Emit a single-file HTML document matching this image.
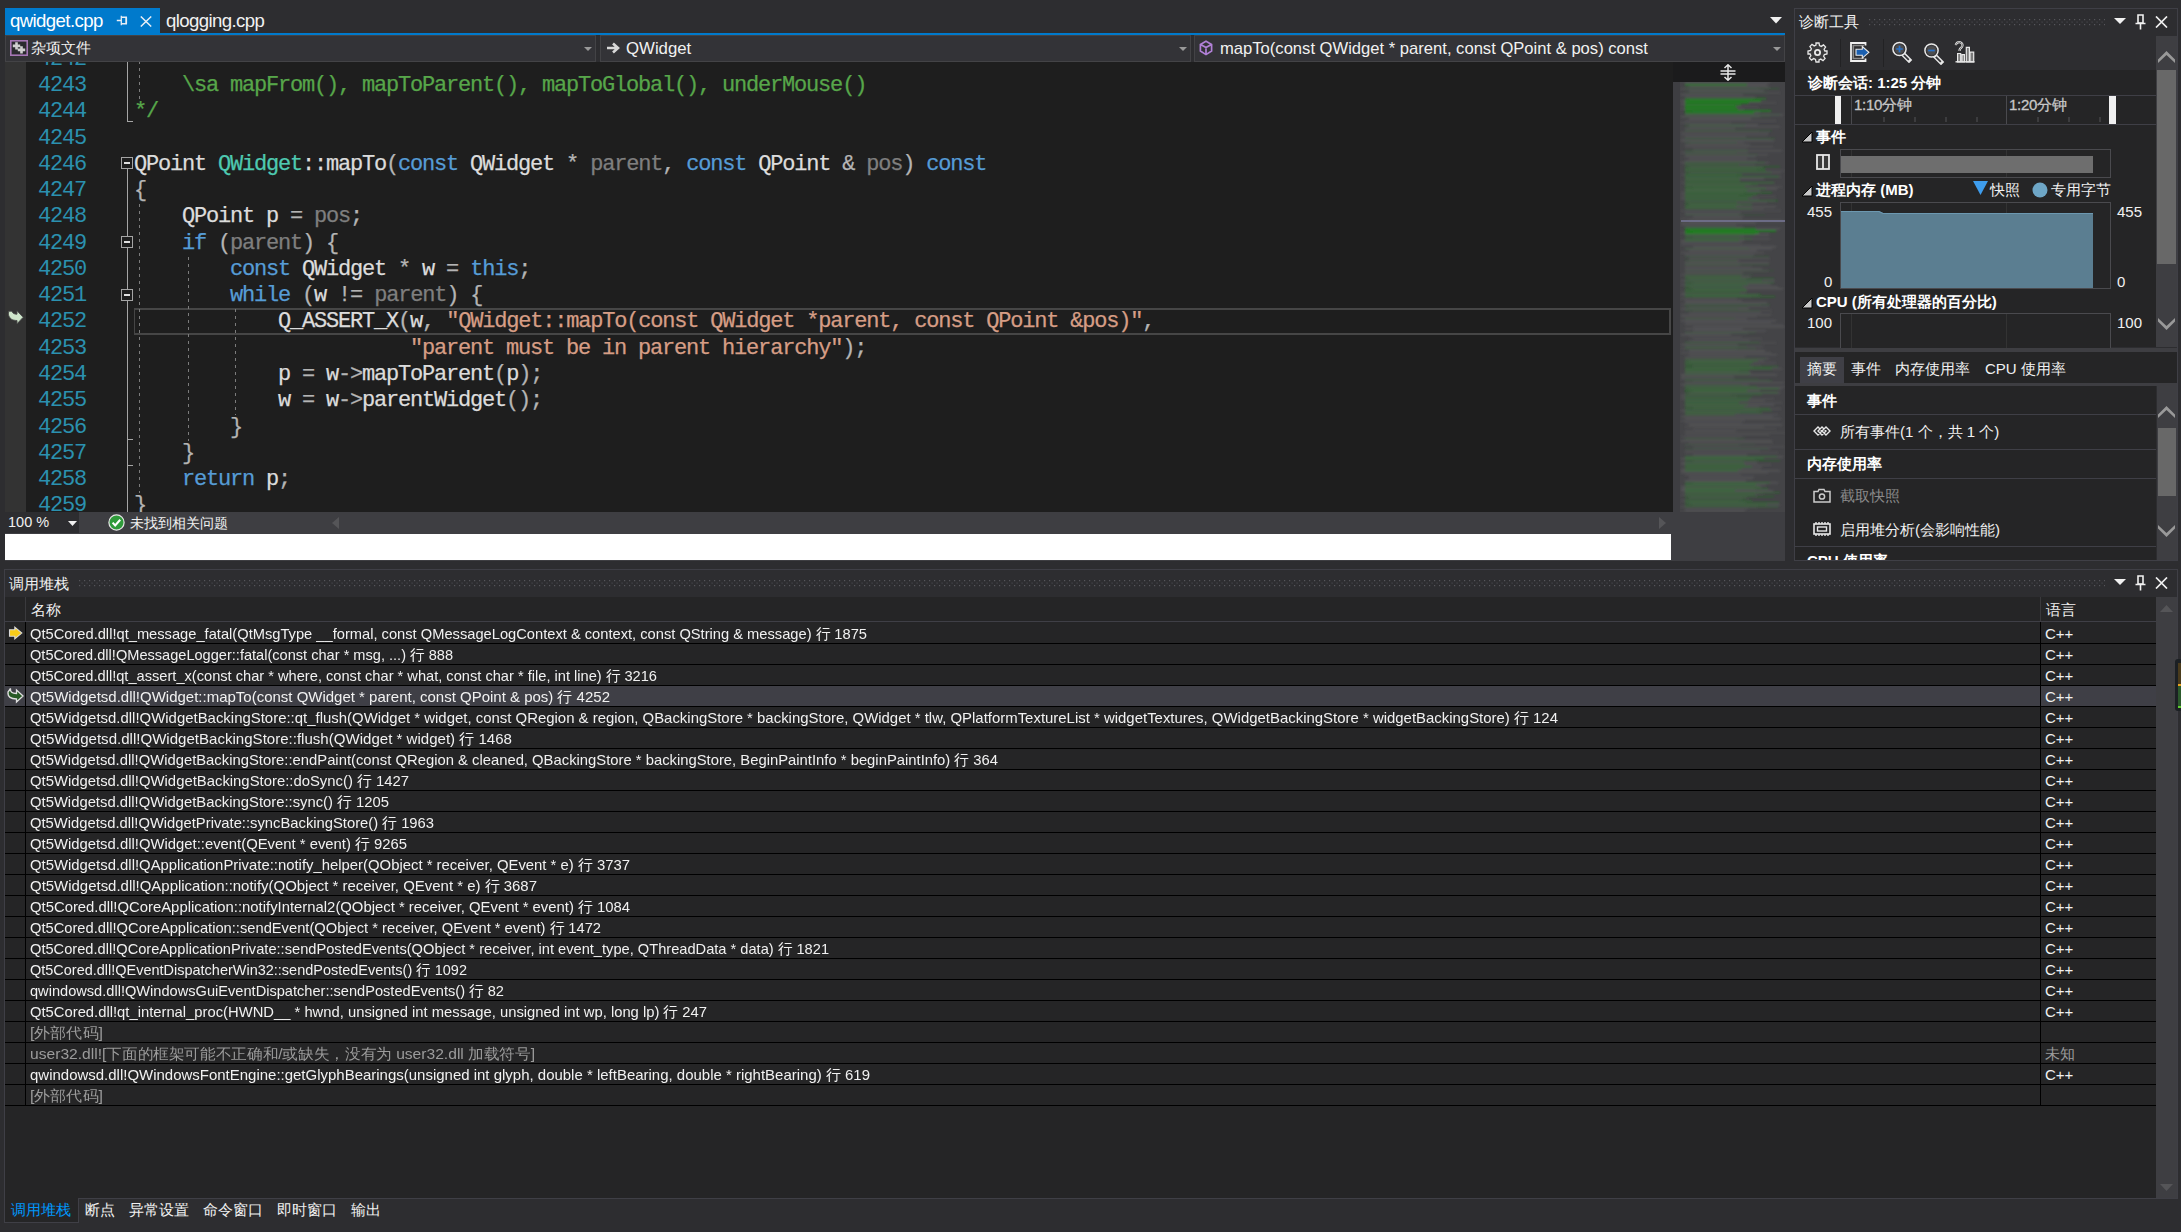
<!DOCTYPE html>
<html><head><meta charset="utf-8"><style>
*{margin:0;padding:0;box-sizing:border-box}
html,body{width:2181px;height:1232px;overflow:hidden;background:#2d2d30;font-family:"Liberation Sans",sans-serif;color:#f1f1f1}
.a{position:absolute}
.code{position:absolute;left:134px;font-family:"Liberation Mono",monospace;font-size:22px;letter-spacing:-1.2px;white-space:pre;color:#dcdcdc;line-height:26px;height:26px;-webkit-text-stroke:0.25px currentColor}
.ln{position:absolute;left:20px;width:66px;text-align:right;font-family:"Liberation Mono",monospace;font-size:22px;letter-spacing:-1.2px;color:#2b91af;line-height:26px;height:26px;white-space:pre}
.k{color:#569cd6}.t{color:#4ec9b0}.c{color:#57a64a}.s{color:#d69d85}.p{color:#7f7f7f}.o{color:#b4b4b4}
.cs{position:absolute;left:30px;font-size:15px;line-height:20px;white-space:pre;color:#f1f1f1}
.lang{position:absolute;left:2045px;font-size:15px;line-height:20px;white-space:pre;color:#f1f1f1}
.row{position:absolute;left:5px;width:2151px;height:21px;background:#252526;border-bottom:1px solid #0f0f0f}
.icol{position:absolute;left:5px;width:20px;height:21px;background:#252526;border-right:1px solid #0f0f0f;border-bottom:1px solid #0f0f0f}
.gray{color:#999}
.grip{background-image:radial-gradient(circle,#4a4a4e 0.8px,transparent 1px);background-size:4px 4px}
.guide{width:1px;background-image:linear-gradient(#7c7c7c 50%,transparent 50%);background-size:1px 7px}
.map{background:#434347}

</style></head><body>
<div class="a" style="left:5px;top:8px;width:155px;height:27px;background:#007acc"></div>
<div class="a" style="left:10px;top:9px;font-size:18.6px;line-height:24px;color:#fff;letter-spacing:-0.6px">qwidget.cpp</div>
<svg class="a" style="left:116px;top:15px" width="12" height="11" viewBox="0 0 12 11"><path d="M0.8 5.5H5M5.3 0.8v9.4" stroke="#e8eef5" stroke-width="1.3"/><path d="M5.3 2.3h5v6.4h-5" fill="none" stroke="#e8eef5" stroke-width="1.4"/><path d="M10.3 2.3v6.4" stroke="#e8eef5" stroke-width="1.6"/></svg>
<svg class="a" style="left:140px;top:16px" width="12" height="11" viewBox="0 0 12 11"><path d="M0.8 0.5l10.4 10M11.2 0.5l-10.4 10" stroke="#e8eef5" stroke-width="1.5"/></svg>
<div class="a" style="left:166px;top:9px;font-size:18.6px;line-height:24px;color:#f1f1f1;letter-spacing:-0.6px">qlogging.cpp</div>
<svg class="a" style="left:1770px;top:17px" width="12" height="7" viewBox="0 0 12 7"><path d="M0 0h12L6 6.5z" fill="#f1f1f1"/></svg>
<div class="a" style="left:5px;top:33px;width:1780px;height:2px;background:#007acc"></div>
<div class="a" style="left:5px;top:35px;width:591px;height:27px;background:#333337;border:1px solid #434346"></div>
<svg class="a" style="left:584px;top:47px" width="8" height="4" viewBox="0 0 8 4"><path d="M0 0h8L4 4z" fill="#999"/></svg>
<div class="a" style="left:600px;top:35px;width:591px;height:27px;background:#333337;border:1px solid #434346"></div>
<svg class="a" style="left:1179px;top:47px" width="8" height="4" viewBox="0 0 8 4"><path d="M0 0h8L4 4z" fill="#999"/></svg>
<div class="a" style="left:1194px;top:35px;width:591px;height:27px;background:#333337;border:1px solid #434346"></div>
<svg class="a" style="left:1773px;top:47px" width="8" height="4" viewBox="0 0 8 4"><path d="M0 0h8L4 4z" fill="#999"/></svg>
<svg class="a" style="left:10px;top:40px" width="18" height="16" viewBox="0 0 18 16"><rect x="0.8" y="0.8" width="16.4" height="14.4" fill="#2a2a2e" stroke="#a677b5" stroke-width="1.6"/><path d="M5.2 2.2h2.6v2.4h2.4v2.6H7.8v2.4H5.2V7.2H2.8V4.6h2.4zM10.2 6.2h2.6v2.4h2.4v2.6h-2.4v2.4h-2.6v-2.4H7.8V8.6h2.4z" fill="#d0d0d0"/></svg>
<div class="a" style="left:31px;top:38px;font-size:15px;line-height:20px">杂项文件</div>
<svg class="a" style="left:606px;top:41px" width="15" height="14" viewBox="0 0 15 14"><path d="M1 7h10M7 2.5l5 4.5-5 4.5" fill="none" stroke="#d8d8d8" stroke-width="2.6"/></svg>
<div class="a" style="left:626px;top:38px;font-size:16.8px;line-height:22px">QWidget</div>
<svg class="a" style="left:1199px;top:40px" width="14" height="16" viewBox="0 0 14 16"><path d="M7 1.2l5.6 3.2v6.6L7 14.6 1.4 11V4.4z M1.6 4.5L7 7.6l5.4-3.1 M7 7.6v6.8" fill="none" stroke="#b180d7" stroke-width="1.7"/></svg>
<div class="a" style="left:1220px;top:38px;font-size:16.6px;line-height:22px">mapTo(const QWidget * parent, const QPoint &amp; pos) const</div>
<div class="a" style="left:5px;top:62px;width:1668px;height:450px;background:#1e1e1e"></div>
<div class="a" style="left:5px;top:62px;width:21px;height:450px;background:#333333"></div>
<div class="a" style="left:0;top:62px;width:1673px;height:450px;overflow:hidden">
<div class="a" style="left:134px;top:246px;width:1537px;height:27px;border:2px solid #464646;border-left-width:1px"></div>
<div class="ln" style="top:-15px">4242</div>
<div class="code" style="top:-15px"><span class="c"></span></div>
<div class="ln" style="top:11px">4243</div>
<div class="code" style="top:11px"><span class="c">    \sa mapFrom(), mapToParent(), mapToGlobal(), underMouse()</span></div>
<div class="ln" style="top:37px">4244</div>
<div class="code" style="top:37px"><span class="c">*/</span></div>
<div class="ln" style="top:64px">4245</div>
<div class="code" style="top:64px"></div>
<div class="ln" style="top:90px">4246</div>
<div class="code" style="top:90px">QPoint <span class="t">QWidget</span>::mapTo<span class="o">(</span><span class="k">const</span> QWidget <span class="o">*</span> <span class="p">parent</span><span class="o">,</span> <span class="k">const</span> QPoint <span class="o">&amp;</span> <span class="p">pos</span><span class="o">)</span> <span class="k">const</span></div>
<div class="ln" style="top:116px">4247</div>
<div class="code" style="top:116px"><span class="o">{</span></div>
<div class="ln" style="top:142px">4248</div>
<div class="code" style="top:142px">    QPoint p <span class="o">=</span> <span class="p">pos</span><span class="o">;</span></div>
<div class="ln" style="top:169px">4249</div>
<div class="code" style="top:169px">    <span class="k">if</span> <span class="o">(</span><span class="p">parent</span><span class="o">)</span> <span class="o">{</span></div>
<div class="ln" style="top:195px">4250</div>
<div class="code" style="top:195px">        <span class="k">const</span> QWidget <span class="o">*</span> w <span class="o">=</span> <span class="k">this</span><span class="o">;</span></div>
<div class="ln" style="top:221px">4251</div>
<div class="code" style="top:221px">        <span class="k">while</span> <span class="o">(</span>w <span class="o">!=</span> <span class="p">parent</span><span class="o">)</span> <span class="o">{</span></div>
<div class="ln" style="top:247px">4252</div>
<div class="code" style="top:247px">            Q_ASSERT_X<span class="o">(</span>w<span class="o">,</span> <span class="s">"QWidget::mapTo(const QWidget *parent, const QPoint &amp;pos)"</span><span class="o">,</span></div>
<div class="ln" style="top:274px">4253</div>
<div class="code" style="top:274px">                       <span class="s">"parent must be in parent hierarchy"</span><span class="o">);</span></div>
<div class="ln" style="top:300px">4254</div>
<div class="code" style="top:300px">            p <span class="o">=</span> w<span class="o">-></span>mapToParent<span class="o">(</span>p<span class="o">);</span></div>
<div class="ln" style="top:326px">4255</div>
<div class="code" style="top:326px">            w <span class="o">=</span> w<span class="o">-></span>parentWidget<span class="o">();</span></div>
<div class="ln" style="top:353px">4256</div>
<div class="code" style="top:353px">        <span class="o">}</span></div>
<div class="ln" style="top:379px">4257</div>
<div class="code" style="top:379px">    <span class="o">}</span></div>
<div class="ln" style="top:405px">4258</div>
<div class="code" style="top:405px">    <span class="k">return</span> p<span class="o">;</span></div>
<div class="ln" style="top:431px">4259</div>
<div class="code" style="top:431px"><span class="o">}</span></div>
<div class="a guide" style="left:139px;top:-15px;height:52px"></div>
<div class="a guide" style="left:139px;top:142px;height:289px"></div>
<div class="a guide" style="left:188px;top:195px;height:184px"></div>
<div class="a guide" style="left:235px;top:247px;height:106px"></div>
<div class="a" style="left:127px;top:0px;width:1px;height:59px;background:#a5a5a5"></div>
<div class="a" style="left:127px;top:59px;width:6px;height:1px;background:#a5a5a5"></div>
<div class="a" style="left:121px;top:95px;width:12px;height:12px;border:1px solid #a5a5a5;background:#1e1e1e"><div class="a" style="left:2px;top:4px;width:6px;height:2px;background:#e0e0e0"></div></div>
<div class="a" style="left:127px;top:107px;width:1px;height:343px;background:#a5a5a5"></div>
<div class="a" style="left:121px;top:174px;width:12px;height:12px;border:1px solid #a5a5a5;background:#1e1e1e"><div class="a" style="left:2px;top:4px;width:6px;height:2px;background:#e0e0e0"></div></div>
<div class="a" style="left:121px;top:227px;width:12px;height:12px;border:1px solid #a5a5a5;background:#1e1e1e"><div class="a" style="left:2px;top:4px;width:6px;height:2px;background:#e0e0e0"></div></div>
<div class="a" style="left:127px;top:377px;width:6px;height:1px;background:#a5a5a5"></div>
<div class="a" style="left:127px;top:403px;width:6px;height:1px;background:#a5a5a5"></div>
<svg class="a" style="left:7px;top:247px" width="17" height="16" viewBox="0 0 17 16"><path d="M1.8 2.2h3c.8 2 2.2 3 5.2 3V1.8L16.2 8.3 10 14.8v-3.3C5 11.5 2.2 9.5 1.3 5z" fill="#cfe6cb" stroke="#4a4a4a" stroke-width="0.9"/></svg>
</div>
<div class="a" style="left:1671px;top:62px;width:2px;height:450px;background:#1e1e1e"></div>
<div class="a" style="left:1673px;top:62px;width:112px;height:20px;background:#1b1b1c"></div>
<svg class="a" style="left:1720px;top:64px" width="16" height="17" viewBox="0 0 16 17"><path d="M8 0.5v16M4.5 4L8 0.8 11.5 4M4.5 13L8 16.2 11.5 13M0.5 7h15M0.5 10h15" fill="none" stroke="#e8e8e8" stroke-width="1.5"/></svg>
<svg class="a" style="left:1673px;top:82px" width="112" height="430" viewBox="0 0 112 430"><defs><filter id="bl" x="-5%" y="-5%" width="110%" height="110%"><feGaussianBlur stdDeviation="0.9"/></filter></defs><rect width="112" height="430" fill="#3e3e42"/><rect x="7" y="0" width="105" height="430" fill="#444447"/><g filter="url(#bl)"><rect x="12" y="0" width="85" height="1.5" fill="#5a5a5c" opacity="0.74"/><rect x="12" y="2" width="82" height="1.5" fill="#5a5a5c" opacity="0.73"/><rect x="12" y="2" width="62" height="1.6" fill="#129012" opacity="0.66"/><rect x="16" y="4" width="80" height="1.5" fill="#5a5a5c" opacity="0.63"/><rect x="8" y="6" width="78" height="1.5" fill="#5a5a5c" opacity="0.49"/><rect x="12" y="6" width="94" height="1.2" fill="#1f8a1f" opacity="0.25"/><rect x="16" y="8" width="75" height="1.5" fill="#5a5a5c" opacity="0.78"/><rect x="16" y="10" width="91" height="1.5" fill="#5a5a5c" opacity="0.42"/><rect x="12" y="10" width="83" height="1.2" fill="#1f8a1f" opacity="0.16"/><rect x="8" y="12" width="62" height="1.5" fill="#5a5a5c" opacity="0.75"/><rect x="12" y="14" width="70" height="1.5" fill="#5a5a5c" opacity="0.55"/><rect x="16" y="16" width="64" height="1.5" fill="#5a5a5c" opacity="0.64"/><rect x="12" y="16" width="81" height="1.6" fill="#129012" opacity="0.60"/><rect x="8" y="18" width="79" height="1.5" fill="#5a5a5c" opacity="0.64"/><rect x="12" y="18" width="76" height="1.6" fill="#129012" opacity="0.90"/><rect x="8" y="20" width="95" height="1.5" fill="#5a5a5c" opacity="0.46"/><rect x="12" y="20" width="64" height="1.6" fill="#129012" opacity="0.75"/><rect x="8" y="22" width="54" height="1.5" fill="#5a5a5c" opacity="0.60"/><rect x="12" y="22" width="56" height="1.6" fill="#129012" opacity="0.72"/><rect x="12" y="24" width="74" height="1.5" fill="#5a5a5c" opacity="0.38"/><rect x="12" y="24" width="51" height="1.6" fill="#129012" opacity="0.85"/><rect x="8" y="26" width="63" height="1.5" fill="#5a5a5c" opacity="0.44"/><rect x="12" y="26" width="53" height="1.6" fill="#129012" opacity="0.74"/><rect x="20" y="28" width="75" height="1.5" fill="#5a5a5c" opacity="0.54"/><rect x="12" y="28" width="86" height="1.6" fill="#129012" opacity="0.79"/><rect x="20" y="30" width="67" height="1.5" fill="#5a5a5c" opacity="0.50"/><rect x="12" y="30" width="69" height="1.6" fill="#129012" opacity="0.70"/><rect x="12" y="32" width="98" height="1.5" fill="#5a5a5c" opacity="0.77"/><rect x="12" y="32" width="95" height="1.2" fill="#1f8a1f" opacity="0.17"/><rect x="8" y="34" width="79" height="1.5" fill="#5a5a5c" opacity="0.71"/><rect x="12" y="34" width="85" height="1.2" fill="#1f8a1f" opacity="0.18"/><rect x="16" y="36" width="62" height="1.5" fill="#5a5a5c" opacity="0.79"/><rect x="12" y="38" width="91" height="1.5" fill="#5a5a5c" opacity="0.52"/><rect x="8" y="40" width="50" height="1.5" fill="#5a5a5c" opacity="0.47"/><rect x="16" y="42" width="69" height="1.5" fill="#5a5a5c" opacity="0.80"/><rect x="12" y="42" width="61" height="1.2" fill="#1f8a1f" opacity="0.21"/><rect x="16" y="44" width="91" height="1.5" fill="#5a5a5c" opacity="0.61"/><rect x="12" y="44" width="59" height="1.2" fill="#1f8a1f" opacity="0.18"/><rect x="12" y="46" width="50" height="1.5" fill="#5a5a5c" opacity="0.70"/><rect x="12" y="48" width="74" height="1.5" fill="#5a5a5c" opacity="0.38"/><rect x="12" y="48" width="87" height="1.2" fill="#1f8a1f" opacity="0.25"/><rect x="8" y="50" width="88" height="1.5" fill="#5a5a5c" opacity="0.52"/><rect x="8" y="52" width="87" height="1.5" fill="#5a5a5c" opacity="0.57"/><rect x="12" y="54" width="61" height="1.5" fill="#5a5a5c" opacity="0.63"/><rect x="8" y="56" width="89" height="1.5" fill="#5a5a5c" opacity="0.46"/><rect x="12" y="56" width="90" height="1.2" fill="#1f8a1f" opacity="0.29"/><rect x="8" y="58" width="93" height="1.5" fill="#5a5a5c" opacity="0.78"/><rect x="16" y="60" width="55" height="1.5" fill="#5a5a5c" opacity="0.54"/><rect x="12" y="60" width="52" height="1.2" fill="#1f8a1f" opacity="0.23"/><rect x="12" y="62" width="65" height="1.5" fill="#5a5a5c" opacity="0.68"/><rect x="12" y="64" width="88" height="1.5" fill="#5a5a5c" opacity="0.57"/><rect x="20" y="66" width="54" height="1.5" fill="#5a5a5c" opacity="0.41"/><rect x="20" y="68" width="89" height="1.5" fill="#5a5a5c" opacity="0.63"/><rect x="12" y="68" width="63" height="1.2" fill="#1f8a1f" opacity="0.26"/><rect x="8" y="70" width="67" height="1.5" fill="#5a5a5c" opacity="0.54"/><rect x="12" y="70" width="52" height="1.2" fill="#1f8a1f" opacity="0.18"/><rect x="12" y="72" width="83" height="1.5" fill="#5a5a5c" opacity="0.61"/><rect x="12" y="72" width="73" height="1.2" fill="#1f8a1f" opacity="0.17"/><rect x="12" y="74" width="71" height="1.5" fill="#5a5a5c" opacity="0.65"/><rect x="16" y="76" width="58" height="1.5" fill="#5a5a5c" opacity="0.62"/><rect x="12" y="78" width="72" height="1.5" fill="#5a5a5c" opacity="0.67"/><rect x="8" y="80" width="88" height="1.5" fill="#5a5a5c" opacity="0.64"/><rect x="12" y="80" width="80" height="1.2" fill="#1f8a1f" opacity="0.37"/><rect x="12" y="82" width="70" height="1.5" fill="#5a5a5c" opacity="0.41"/><rect x="12" y="82" width="54" height="1.2" fill="#1f8a1f" opacity="0.37"/><rect x="16" y="84" width="73" height="1.5" fill="#5a5a5c" opacity="0.68"/><rect x="12" y="84" width="95" height="1.2" fill="#1f8a1f" opacity="0.38"/><rect x="12" y="86" width="72" height="1.5" fill="#5a5a5c" opacity="0.39"/><rect x="12" y="86" width="80" height="1.2" fill="#1f8a1f" opacity="0.58"/><rect x="12" y="88" width="100" height="1.5" fill="#5a5a5c" opacity="0.36"/><rect x="12" y="88" width="81" height="1.2" fill="#1f8a1f" opacity="0.49"/><rect x="16" y="90" width="92" height="1.5" fill="#5a5a5c" opacity="0.52"/><rect x="12" y="90" width="87" height="1.2" fill="#1f8a1f" opacity="0.35"/><rect x="8" y="92" width="55" height="1.5" fill="#5a5a5c" opacity="0.39"/><rect x="12" y="92" width="57" height="1.2" fill="#1f8a1f" opacity="0.60"/><rect x="12" y="94" width="96" height="1.5" fill="#5a5a5c" opacity="0.50"/><rect x="12" y="94" width="94" height="1.2" fill="#1f8a1f" opacity="0.50"/><rect x="12" y="96" width="79" height="1.5" fill="#5a5a5c" opacity="0.73"/><rect x="12" y="96" width="55" height="1.2" fill="#1f8a1f" opacity="0.48"/><rect x="16" y="98" width="51" height="1.5" fill="#5a5a5c" opacity="0.49"/><rect x="12" y="98" width="55" height="1.2" fill="#1f8a1f" opacity="0.47"/><rect x="8" y="100" width="94" height="1.5" fill="#5a5a5c" opacity="0.40"/><rect x="12" y="100" width="89" height="1.2" fill="#1f8a1f" opacity="0.52"/><rect x="12" y="102" width="66" height="1.5" fill="#5a5a5c" opacity="0.75"/><rect x="12" y="102" width="73" height="1.2" fill="#1f8a1f" opacity="0.43"/><rect x="20" y="104" width="89" height="1.5" fill="#5a5a5c" opacity="0.44"/><rect x="12" y="104" width="60" height="1.2" fill="#1f8a1f" opacity="0.54"/><rect x="12" y="106" width="92" height="1.5" fill="#5a5a5c" opacity="0.77"/><rect x="12" y="106" width="81" height="1.2" fill="#1f8a1f" opacity="0.57"/><rect x="12" y="108" width="75" height="1.5" fill="#5a5a5c" opacity="0.65"/><rect x="12" y="108" width="62" height="1.2" fill="#1f8a1f" opacity="0.51"/><rect x="8" y="110" width="63" height="1.5" fill="#5a5a5c" opacity="0.52"/><rect x="12" y="110" width="87" height="1.2" fill="#1f8a1f" opacity="0.58"/><rect x="8" y="112" width="58" height="1.5" fill="#5a5a5c" opacity="0.41"/><rect x="12" y="112" width="72" height="1.2" fill="#1f8a1f" opacity="0.56"/><rect x="8" y="114" width="95" height="1.5" fill="#5a5a5c" opacity="0.38"/><rect x="12" y="114" width="67" height="1.2" fill="#1f8a1f" opacity="0.56"/><rect x="8" y="116" width="78" height="1.5" fill="#5a5a5c" opacity="0.56"/><rect x="12" y="116" width="63" height="1.2" fill="#1f8a1f" opacity="0.56"/><rect x="12" y="118" width="90" height="1.5" fill="#5a5a5c" opacity="0.58"/><rect x="12" y="118" width="93" height="1.2" fill="#1f8a1f" opacity="0.43"/><rect x="16" y="120" width="78" height="1.5" fill="#5a5a5c" opacity="0.49"/><rect x="12" y="120" width="52" height="1.2" fill="#1f8a1f" opacity="0.42"/><rect x="16" y="122" width="52" height="1.5" fill="#5a5a5c" opacity="0.66"/><rect x="12" y="122" width="67" height="1.2" fill="#1f8a1f" opacity="0.49"/><rect x="12" y="124" width="91" height="1.5" fill="#5a5a5c" opacity="0.71"/><rect x="12" y="124" width="51" height="1.2" fill="#1f8a1f" opacity="0.51"/><rect x="12" y="126" width="79" height="1.5" fill="#5a5a5c" opacity="0.44"/><rect x="12" y="126" width="67" height="1.2" fill="#1f8a1f" opacity="0.41"/><rect x="8" y="128" width="100" height="1.5" fill="#5a5a5c" opacity="0.37"/><rect x="12" y="130" width="56" height="1.5" fill="#5a5a5c" opacity="0.63"/><rect x="12" y="132" width="54" height="1.5" fill="#5a5a5c" opacity="0.66"/><rect x="12" y="132" width="80" height="1.2" fill="#1f8a1f" opacity="0.19"/><rect x="20" y="134" width="50" height="1.5" fill="#5a5a5c" opacity="0.69"/><rect x="8" y="136" width="61" height="1.5" fill="#5a5a5c" opacity="0.45"/><rect x="16" y="138" width="94" height="1.5" fill="#5a5a5c" opacity="0.78"/><rect x="8" y="140" width="75" height="1.5" fill="#5a5a5c" opacity="0.73"/><rect x="8" y="142" width="55" height="1.5" fill="#5a5a5c" opacity="0.53"/><rect x="12" y="144" width="58" height="1.5" fill="#5a5a5c" opacity="0.55"/><rect x="12" y="144" width="50" height="1.2" fill="#1f8a1f" opacity="0.21"/><rect x="16" y="146" width="91" height="1.5" fill="#5a5a5c" opacity="0.75"/><rect x="12" y="146" width="71" height="1.6" fill="#129012" opacity="0.74"/><rect x="20" y="148" width="63" height="1.5" fill="#5a5a5c" opacity="0.39"/><rect x="12" y="148" width="91" height="1.6" fill="#129012" opacity="0.88"/><rect x="8" y="150" width="63" height="1.5" fill="#5a5a5c" opacity="0.46"/><rect x="12" y="150" width="74" height="1.6" fill="#129012" opacity="0.89"/><rect x="12" y="152" width="84" height="1.5" fill="#5a5a5c" opacity="0.79"/><rect x="12" y="152" width="70" height="1.2" fill="#1f8a1f" opacity="0.42"/><rect x="20" y="154" width="51" height="1.5" fill="#5a5a5c" opacity="0.51"/><rect x="12" y="154" width="55" height="1.2" fill="#1f8a1f" opacity="0.36"/><rect x="12" y="156" width="85" height="1.5" fill="#5a5a5c" opacity="0.54"/><rect x="12" y="156" width="67" height="1.2" fill="#1f8a1f" opacity="0.47"/><rect x="8" y="158" width="63" height="1.5" fill="#5a5a5c" opacity="0.71"/><rect x="12" y="158" width="54" height="1.2" fill="#1f8a1f" opacity="0.46"/><rect x="8" y="160" width="61" height="1.5" fill="#5a5a5c" opacity="0.59"/><rect x="8" y="162" width="80" height="1.5" fill="#5a5a5c" opacity="0.42"/><rect x="20" y="164" width="83" height="1.5" fill="#5a5a5c" opacity="0.73"/><rect x="12" y="166" width="87" height="1.5" fill="#5a5a5c" opacity="0.78"/><rect x="12" y="166" width="64" height="1.2" fill="#1f8a1f" opacity="0.22"/><rect x="16" y="168" width="68" height="1.5" fill="#5a5a5c" opacity="0.72"/><rect x="8" y="170" width="83" height="1.5" fill="#5a5a5c" opacity="0.58"/><rect x="12" y="172" width="69" height="1.5" fill="#5a5a5c" opacity="0.65"/><rect x="16" y="174" width="63" height="1.5" fill="#5a5a5c" opacity="0.49"/><rect x="12" y="174" width="84" height="1.2" fill="#1f8a1f" opacity="0.23"/><rect x="16" y="176" width="81" height="1.5" fill="#5a5a5c" opacity="0.44"/><rect x="16" y="178" width="50" height="1.5" fill="#5a5a5c" opacity="0.62"/><rect x="12" y="178" width="52" height="1.2" fill="#1f8a1f" opacity="0.23"/><rect x="12" y="180" width="84" height="1.5" fill="#5a5a5c" opacity="0.71"/><rect x="12" y="182" width="55" height="1.5" fill="#5a5a5c" opacity="0.66"/><rect x="12" y="182" width="84" height="1.2" fill="#1f8a1f" opacity="0.22"/><rect x="12" y="184" width="67" height="1.5" fill="#5a5a5c" opacity="0.46"/><rect x="12" y="186" width="77" height="1.5" fill="#5a5a5c" opacity="0.76"/><rect x="12" y="188" width="83" height="1.5" fill="#5a5a5c" opacity="0.49"/><rect x="12" y="188" width="89" height="1.2" fill="#1f8a1f" opacity="0.15"/><rect x="12" y="190" width="58" height="1.5" fill="#5a5a5c" opacity="0.67"/><rect x="8" y="192" width="62" height="1.5" fill="#5a5a5c" opacity="0.42"/><rect x="12" y="192" width="68" height="1.2" fill="#1f8a1f" opacity="0.20"/><rect x="12" y="194" width="65" height="1.5" fill="#5a5a5c" opacity="0.63"/><rect x="12" y="194" width="56" height="1.2" fill="#1f8a1f" opacity="0.47"/><rect x="16" y="196" width="57" height="1.5" fill="#5a5a5c" opacity="0.73"/><rect x="12" y="196" width="89" height="1.2" fill="#1f8a1f" opacity="0.41"/><rect x="8" y="198" width="94" height="1.5" fill="#5a5a5c" opacity="0.59"/><rect x="12" y="198" width="77" height="1.2" fill="#1f8a1f" opacity="0.36"/><rect x="20" y="200" width="76" height="1.5" fill="#5a5a5c" opacity="0.72"/><rect x="12" y="200" width="89" height="1.2" fill="#1f8a1f" opacity="0.39"/><rect x="8" y="202" width="90" height="1.5" fill="#5a5a5c" opacity="0.59"/><rect x="12" y="202" width="63" height="1.2" fill="#1f8a1f" opacity="0.48"/><rect x="16" y="204" width="89" height="1.5" fill="#5a5a5c" opacity="0.61"/><rect x="12" y="204" width="58" height="1.2" fill="#1f8a1f" opacity="0.41"/><rect x="20" y="206" width="90" height="1.5" fill="#5a5a5c" opacity="0.71"/><rect x="12" y="206" width="61" height="1.2" fill="#1f8a1f" opacity="0.43"/><rect x="12" y="208" width="62" height="1.5" fill="#5a5a5c" opacity="0.45"/><rect x="12" y="208" width="62" height="1.2" fill="#1f8a1f" opacity="0.57"/><rect x="8" y="210" width="65" height="1.5" fill="#5a5a5c" opacity="0.41"/><rect x="12" y="210" width="55" height="1.2" fill="#1f8a1f" opacity="0.41"/><rect x="8" y="212" width="77" height="1.5" fill="#5a5a5c" opacity="0.72"/><rect x="12" y="212" width="76" height="1.2" fill="#1f8a1f" opacity="0.49"/><rect x="20" y="214" width="58" height="1.5" fill="#5a5a5c" opacity="0.44"/><rect x="12" y="214" width="90" height="1.2" fill="#1f8a1f" opacity="0.52"/><rect x="8" y="216" width="56" height="1.5" fill="#5a5a5c" opacity="0.44"/><rect x="12" y="218" width="57" height="1.5" fill="#5a5a5c" opacity="0.67"/><rect x="12" y="220" width="82" height="1.5" fill="#5a5a5c" opacity="0.80"/><rect x="8" y="222" width="80" height="1.5" fill="#5a5a5c" opacity="0.40"/><rect x="12" y="222" width="85" height="1.2" fill="#1f8a1f" opacity="0.24"/><rect x="16" y="224" width="80" height="1.5" fill="#5a5a5c" opacity="0.42"/><rect x="12" y="224" width="63" height="1.2" fill="#1f8a1f" opacity="0.18"/><rect x="8" y="226" width="68" height="1.5" fill="#5a5a5c" opacity="0.77"/><rect x="12" y="226" width="53" height="1.2" fill="#1f8a1f" opacity="0.17"/><rect x="20" y="228" width="79" height="1.5" fill="#5a5a5c" opacity="0.38"/><rect x="12" y="228" width="75" height="1.2" fill="#1f8a1f" opacity="0.22"/><rect x="16" y="230" width="72" height="1.5" fill="#5a5a5c" opacity="0.54"/><rect x="8" y="232" width="90" height="1.5" fill="#5a5a5c" opacity="0.67"/><rect x="8" y="234" width="76" height="1.5" fill="#5a5a5c" opacity="0.55"/><rect x="12" y="236" width="62" height="1.5" fill="#5a5a5c" opacity="0.62"/><rect x="12" y="236" width="50" height="1.2" fill="#1f8a1f" opacity="0.20"/><rect x="8" y="238" width="95" height="1.5" fill="#5a5a5c" opacity="0.74"/><rect x="12" y="240" width="86" height="1.5" fill="#5a5a5c" opacity="0.62"/><rect x="12" y="242" width="98" height="1.5" fill="#5a5a5c" opacity="0.47"/><rect x="20" y="244" width="92" height="1.5" fill="#5a5a5c" opacity="0.70"/><rect x="12" y="246" width="58" height="1.5" fill="#5a5a5c" opacity="0.75"/><rect x="20" y="248" width="73" height="1.5" fill="#5a5a5c" opacity="0.70"/><rect x="12" y="250" width="63" height="1.5" fill="#5a5a5c" opacity="0.68"/><rect x="12" y="250" width="71" height="1.2" fill="#1f8a1f" opacity="0.20"/><rect x="8" y="252" width="50" height="1.5" fill="#5a5a5c" opacity="0.75"/><rect x="16" y="254" width="53" height="1.5" fill="#5a5a5c" opacity="0.45"/><rect x="20" y="256" width="69" height="1.5" fill="#5a5a5c" opacity="0.50"/><rect x="16" y="258" width="61" height="1.5" fill="#5a5a5c" opacity="0.59"/><rect x="12" y="260" width="91" height="1.5" fill="#5a5a5c" opacity="0.45"/><rect x="12" y="260" width="75" height="1.2" fill="#1f8a1f" opacity="0.30"/><rect x="8" y="262" width="57" height="1.5" fill="#5a5a5c" opacity="0.63"/><rect x="12" y="264" width="78" height="1.5" fill="#5a5a5c" opacity="0.53"/><rect x="12" y="264" width="62" height="1.2" fill="#1f8a1f" opacity="0.25"/><rect x="8" y="266" width="56" height="1.5" fill="#5a5a5c" opacity="0.47"/><rect x="12" y="266" width="71" height="1.2" fill="#1f8a1f" opacity="0.23"/><rect x="16" y="268" width="76" height="1.5" fill="#5a5a5c" opacity="0.79"/><rect x="8" y="270" width="90" height="1.5" fill="#5a5a5c" opacity="0.55"/><rect x="16" y="272" width="88" height="1.5" fill="#5a5a5c" opacity="0.65"/><rect x="12" y="274" width="60" height="1.5" fill="#5a5a5c" opacity="0.52"/><rect x="12" y="276" width="84" height="1.5" fill="#5a5a5c" opacity="0.63"/><rect x="12" y="276" width="81" height="1.2" fill="#1f8a1f" opacity="0.21"/><rect x="16" y="278" width="75" height="1.5" fill="#5a5a5c" opacity="0.62"/><rect x="12" y="278" width="73" height="1.2" fill="#1f8a1f" opacity="0.48"/><rect x="12" y="280" width="91" height="1.5" fill="#5a5a5c" opacity="0.47"/><rect x="12" y="280" width="68" height="1.2" fill="#1f8a1f" opacity="0.52"/><rect x="20" y="282" width="68" height="1.5" fill="#5a5a5c" opacity="0.36"/><rect x="12" y="282" width="65" height="1.2" fill="#1f8a1f" opacity="0.50"/><rect x="20" y="284" width="60" height="1.5" fill="#5a5a5c" opacity="0.53"/><rect x="12" y="284" width="93" height="1.2" fill="#1f8a1f" opacity="0.45"/><rect x="12" y="286" width="97" height="1.5" fill="#5a5a5c" opacity="0.53"/><rect x="12" y="286" width="87" height="1.2" fill="#1f8a1f" opacity="0.60"/><rect x="12" y="288" width="54" height="1.5" fill="#5a5a5c" opacity="0.71"/><rect x="12" y="288" width="64" height="1.2" fill="#1f8a1f" opacity="0.46"/><rect x="12" y="290" width="66" height="1.5" fill="#5a5a5c" opacity="0.79"/><rect x="12" y="290" width="65" height="1.2" fill="#1f8a1f" opacity="0.36"/><rect x="8" y="292" width="96" height="1.5" fill="#5a5a5c" opacity="0.76"/><rect x="12" y="292" width="65" height="1.2" fill="#1f8a1f" opacity="0.24"/><rect x="8" y="294" width="53" height="1.5" fill="#5a5a5c" opacity="0.63"/><rect x="8" y="296" width="53" height="1.5" fill="#5a5a5c" opacity="0.51"/><rect x="12" y="296" width="73" height="1.2" fill="#1f8a1f" opacity="0.22"/><rect x="20" y="298" width="76" height="1.5" fill="#5a5a5c" opacity="0.55"/><rect x="12" y="298" width="87" height="1.2" fill="#1f8a1f" opacity="0.25"/><rect x="12" y="300" width="99" height="1.5" fill="#5a5a5c" opacity="0.68"/><rect x="8" y="302" width="68" height="1.5" fill="#5a5a5c" opacity="0.68"/><rect x="12" y="302" width="57" height="1.2" fill="#1f8a1f" opacity="0.23"/><rect x="12" y="304" width="100" height="1.5" fill="#5a5a5c" opacity="0.58"/><rect x="12" y="304" width="72" height="1.2" fill="#1f8a1f" opacity="0.42"/><rect x="16" y="306" width="93" height="1.5" fill="#5a5a5c" opacity="0.68"/><rect x="12" y="306" width="94" height="1.2" fill="#1f8a1f" opacity="0.50"/><rect x="20" y="308" width="67" height="1.5" fill="#5a5a5c" opacity="0.69"/><rect x="12" y="308" width="62" height="1.2" fill="#1f8a1f" opacity="0.59"/><rect x="16" y="310" width="91" height="1.5" fill="#5a5a5c" opacity="0.76"/><rect x="12" y="310" width="93" height="1.2" fill="#1f8a1f" opacity="0.36"/><rect x="8" y="312" width="50" height="1.5" fill="#5a5a5c" opacity="0.47"/><rect x="12" y="312" width="77" height="1.2" fill="#1f8a1f" opacity="0.36"/><rect x="8" y="314" width="56" height="1.5" fill="#5a5a5c" opacity="0.45"/><rect x="12" y="314" width="67" height="1.2" fill="#1f8a1f" opacity="0.37"/><rect x="8" y="316" width="93" height="1.5" fill="#5a5a5c" opacity="0.42"/><rect x="12" y="316" width="65" height="1.2" fill="#1f8a1f" opacity="0.51"/><rect x="12" y="318" width="80" height="1.5" fill="#5a5a5c" opacity="0.57"/><rect x="12" y="318" width="63" height="1.2" fill="#1f8a1f" opacity="0.43"/><rect x="12" y="320" width="97" height="1.5" fill="#5a5a5c" opacity="0.41"/><rect x="12" y="320" width="54" height="1.2" fill="#1f8a1f" opacity="0.55"/><rect x="12" y="322" width="89" height="1.5" fill="#5a5a5c" opacity="0.73"/><rect x="12" y="322" width="63" height="1.2" fill="#1f8a1f" opacity="0.46"/><rect x="20" y="324" width="66" height="1.5" fill="#5a5a5c" opacity="0.53"/><rect x="12" y="324" width="59" height="1.2" fill="#1f8a1f" opacity="0.44"/><rect x="20" y="326" width="88" height="1.5" fill="#5a5a5c" opacity="0.50"/><rect x="12" y="326" width="85" height="1.2" fill="#1f8a1f" opacity="0.54"/><rect x="8" y="328" width="77" height="1.5" fill="#5a5a5c" opacity="0.64"/><rect x="12" y="328" width="87" height="1.2" fill="#1f8a1f" opacity="0.37"/><rect x="12" y="330" width="55" height="1.5" fill="#5a5a5c" opacity="0.59"/><rect x="12" y="330" width="77" height="1.2" fill="#1f8a1f" opacity="0.49"/><rect x="12" y="332" width="93" height="1.5" fill="#5a5a5c" opacity="0.56"/><rect x="12" y="332" width="50" height="1.2" fill="#1f8a1f" opacity="0.37"/><rect x="8" y="334" width="92" height="1.5" fill="#5a5a5c" opacity="0.62"/><rect x="12" y="336" width="96" height="1.5" fill="#5a5a5c" opacity="0.69"/><rect x="8" y="338" width="64" height="1.5" fill="#5a5a5c" opacity="0.51"/><rect x="12" y="340" width="57" height="1.5" fill="#5a5a5c" opacity="0.50"/><rect x="16" y="342" width="93" height="1.5" fill="#5a5a5c" opacity="0.76"/><rect x="12" y="344" width="79" height="1.5" fill="#5a5a5c" opacity="0.49"/><rect x="20" y="346" width="83" height="1.5" fill="#5a5a5c" opacity="0.46"/><rect x="12" y="348" width="51" height="1.5" fill="#5a5a5c" opacity="0.51"/><rect x="12" y="350" width="100" height="1.5" fill="#5a5a5c" opacity="0.44"/><rect x="12" y="352" width="84" height="1.5" fill="#5a5a5c" opacity="0.42"/><rect x="8" y="354" width="61" height="1.5" fill="#5a5a5c" opacity="0.39"/><rect x="12" y="356" width="51" height="1.5" fill="#5a5a5c" opacity="0.45"/><rect x="12" y="356" width="60" height="1.2" fill="#1f8a1f" opacity="0.24"/><rect x="8" y="358" width="91" height="1.5" fill="#5a5a5c" opacity="0.73"/><rect x="16" y="360" width="84" height="1.5" fill="#5a5a5c" opacity="0.49"/><rect x="12" y="362" width="55" height="1.5" fill="#5a5a5c" opacity="0.47"/><rect x="12" y="362" width="70" height="1.2" fill="#1f8a1f" opacity="0.16"/><rect x="20" y="364" width="91" height="1.5" fill="#5a5a5c" opacity="0.41"/><rect x="20" y="366" width="77" height="1.5" fill="#5a5a5c" opacity="0.46"/><rect x="12" y="366" width="83" height="1.2" fill="#1f8a1f" opacity="0.20"/><rect x="12" y="368" width="75" height="1.5" fill="#5a5a5c" opacity="0.51"/><rect x="12" y="370" width="93" height="1.5" fill="#5a5a5c" opacity="0.41"/><rect x="20" y="372" width="54" height="1.5" fill="#5a5a5c" opacity="0.67"/><rect x="12" y="374" width="98" height="1.5" fill="#5a5a5c" opacity="0.72"/><rect x="12" y="374" width="92" height="1.2" fill="#1f8a1f" opacity="0.44"/><rect x="8" y="376" width="74" height="1.5" fill="#5a5a5c" opacity="0.73"/><rect x="12" y="376" width="79" height="1.2" fill="#1f8a1f" opacity="0.59"/><rect x="20" y="378" width="51" height="1.5" fill="#5a5a5c" opacity="0.59"/><rect x="12" y="378" width="95" height="1.2" fill="#1f8a1f" opacity="0.35"/><rect x="8" y="380" width="76" height="1.5" fill="#5a5a5c" opacity="0.77"/><rect x="12" y="380" width="59" height="1.2" fill="#1f8a1f" opacity="0.41"/><rect x="8" y="382" width="90" height="1.5" fill="#5a5a5c" opacity="0.52"/><rect x="12" y="382" width="60" height="1.2" fill="#1f8a1f" opacity="0.43"/><rect x="12" y="384" width="77" height="1.5" fill="#5a5a5c" opacity="0.59"/><rect x="12" y="384" width="67" height="1.2" fill="#1f8a1f" opacity="0.59"/><rect x="8" y="386" width="80" height="1.5" fill="#5a5a5c" opacity="0.49"/><rect x="12" y="386" width="57" height="1.2" fill="#1f8a1f" opacity="0.43"/><rect x="8" y="388" width="99" height="1.5" fill="#5a5a5c" opacity="0.76"/><rect x="12" y="388" width="53" height="1.2" fill="#1f8a1f" opacity="0.54"/><rect x="8" y="390" width="87" height="1.5" fill="#5a5a5c" opacity="0.57"/><rect x="12" y="392" width="56" height="1.5" fill="#5a5a5c" opacity="0.44"/><rect x="16" y="394" width="65" height="1.5" fill="#5a5a5c" opacity="0.62"/><rect x="16" y="396" width="64" height="1.5" fill="#5a5a5c" opacity="0.55"/><rect x="12" y="398" width="61" height="1.5" fill="#5a5a5c" opacity="0.76"/><rect x="20" y="400" width="85" height="1.5" fill="#5a5a5c" opacity="0.77"/><rect x="12" y="400" width="85" height="1.2" fill="#1f8a1f" opacity="0.47"/><rect x="12" y="402" width="81" height="1.5" fill="#5a5a5c" opacity="0.75"/><rect x="12" y="402" width="71" height="1.2" fill="#1f8a1f" opacity="0.52"/><rect x="8" y="404" width="80" height="1.5" fill="#5a5a5c" opacity="0.74"/><rect x="12" y="404" width="75" height="1.2" fill="#1f8a1f" opacity="0.36"/><rect x="8" y="406" width="74" height="1.5" fill="#5a5a5c" opacity="0.79"/><rect x="12" y="406" width="83" height="1.2" fill="#1f8a1f" opacity="0.54"/><rect x="8" y="408" width="92" height="1.5" fill="#5a5a5c" opacity="0.77"/><rect x="12" y="408" width="50" height="1.2" fill="#1f8a1f" opacity="0.57"/><rect x="12" y="410" width="78" height="1.5" fill="#5a5a5c" opacity="0.71"/><rect x="12" y="410" width="95" height="1.2" fill="#1f8a1f" opacity="0.46"/><rect x="8" y="412" width="76" height="1.5" fill="#5a5a5c" opacity="0.42"/><rect x="12" y="412" width="70" height="1.2" fill="#1f8a1f" opacity="0.39"/><rect x="16" y="414" width="58" height="1.5" fill="#5a5a5c" opacity="0.64"/><rect x="12" y="414" width="89" height="1.2" fill="#1f8a1f" opacity="0.42"/><rect x="16" y="416" width="53" height="1.5" fill="#5a5a5c" opacity="0.42"/><rect x="12" y="416" width="61" height="1.2" fill="#1f8a1f" opacity="0.35"/><rect x="8" y="418" width="58" height="1.5" fill="#5a5a5c" opacity="0.39"/><rect x="12" y="418" width="67" height="1.2" fill="#1f8a1f" opacity="0.50"/><rect x="16" y="420" width="56" height="1.5" fill="#5a5a5c" opacity="0.75"/><rect x="12" y="420" width="94" height="1.2" fill="#1f8a1f" opacity="0.47"/><rect x="20" y="422" width="87" height="1.5" fill="#5a5a5c" opacity="0.59"/><rect x="12" y="422" width="82" height="1.2" fill="#1f8a1f" opacity="0.43"/><rect x="8" y="424" width="76" height="1.5" fill="#5a5a5c" opacity="0.44"/><rect x="12" y="424" width="93" height="1.2" fill="#1f8a1f" opacity="0.37"/><rect x="12" y="426" width="63" height="1.5" fill="#5a5a5c" opacity="0.37"/><rect x="12" y="428" width="60" height="1.5" fill="#5a5a5c" opacity="0.78"/></g><rect x="8" y="138" width="104" height="2" fill="#70708c" opacity="0.9"/><rect x="0" y="0" width="7" height="430" fill="#3e3e42"/></svg>
<div class="a" style="left:5px;top:512px;width:1780px;height:49px;background:#3e3e42"></div>
<div class="a" style="left:5px;top:512px;width:74px;height:21px;background:#2d2d30"></div>
<div class="a" style="left:8px;top:513px;font-size:14.5px;line-height:19px">100 %</div>
<svg class="a" style="left:68px;top:521px" width="9" height="5" viewBox="0 0 9 5"><path d="M0 0h9L4.5 5z" fill="#f1f1f1"/></svg>
<svg class="a" style="left:108px;top:514px" width="17" height="17" viewBox="0 0 17 17"><circle cx="8.5" cy="8.5" r="7.6" fill="#2f9b3a" stroke="#e8e8e8" stroke-width="1.2"/><path d="M4.6 8.6l2.6 2.8 5-5.6" fill="none" stroke="#fff" stroke-width="2.1"/></svg>
<div class="a" style="left:130px;top:514px;font-size:14px;line-height:19px;color:#f1f1f1">未找到相关问题</div>
<svg class="a" style="left:332px;top:517px" width="7" height="12" viewBox="0 0 7 12"><path d="M7 0v12L0 6z" fill="#555558"/></svg>
<svg class="a" style="left:1659px;top:517px" width="7" height="12" viewBox="0 0 7 12"><path d="M0 0v12l7-6z" fill="#555558"/></svg>
<div class="a" style="left:5px;top:534px;width:1666px;height:26px;background:#fff"></div>
<div class="a" style="left:1794px;top:8px;width:384px;height:553px;background:#2d2d30;border:1px solid #3f3f46"></div>
<div class="a" style="left:1799px;top:13px;font-size:15px;line-height:18px;color:#f1f1f1">诊断工具</div>
<svg class="a" style="left:1869px;top:19px" width="236" height="7"><defs><pattern id="gp1" width="5" height="5" patternUnits="userSpaceOnUse"><rect x="0" y="0" width="1.2" height="1.2" fill="#55555a"/><rect x="2.5" y="2.5" width="1.2" height="1.2" fill="#45454a"/></pattern></defs><rect width="236" height="7" fill="url(#gp1)"/></svg>
<svg class="a" style="left:2114px;top:18px" width="12" height="7" viewBox="0 0 12 7"><path d="M0 0h12L6 6z" fill="#f1f1f1"/></svg>
<svg class="a" style="left:2135px;top:14px" width="11" height="16" viewBox="0 0 11 16"><path d="M3 1h5v8H3z" fill="none" stroke="#f1f1f1" stroke-width="1.6"/><path d="M0.5 9.5h10M5.5 9.5v6" stroke="#f1f1f1" stroke-width="1.6"/></svg>
<svg class="a" style="left:2155px;top:16px" width="13" height="12" viewBox="0 0 13 12"><path d="M1 0.5l11 11M12 0.5l-11 11" stroke="#f1f1f1" stroke-width="1.7"/></svg>
<svg class="a" style="left:1807px;top:42px" width="21" height="21" viewBox="0 0 21 21"><path d="M9 1h3l.5 2.6 1.8.8 2.2-1.5 2.1 2.1-1.5 2.2.8 1.8L20 9v3l-2.6.5-.8 1.8 1.5 2.2-2.1 2.1-2.2-1.5-1.8.8L12 20H9l-.5-2.6-1.8-.8-2.2 1.5-2.1-2.1 1.5-2.2-.8-1.8L1 12V9l2.6-.5.8-1.8-1.5-2.2 2.1-2.1 2.2 1.5 1.8-.8z" fill="#3a3a3c" stroke="#e8e8e8" stroke-width="1.3"/><circle cx="10.5" cy="10.5" r="2.6" fill="none" stroke="#e8e8e8" stroke-width="1.8"/></svg>
<div class="a" style="left:1840px;top:39px;width:1px;height:28px;background:#222224"></div>
<svg class="a" style="left:1849px;top:41px" width="22" height="22" viewBox="0 0 22 22"><path d="M16.5 4.5V2H2v18h14.5v-2.5" fill="none" stroke="#f0f0f0" stroke-width="1.8"/><path d="M15 4.5H4.3v13H15" fill="none" stroke="#8a8a8a" stroke-width="1.6"/><path d="M7 8.3h6.3V5.5l6.6 5.8-6.6 5.8v-2.8H7z" fill="#1a5fb0" stroke="#e8e8e8" stroke-width="1.1"/></svg>
<div class="a" style="left:1883px;top:39px;width:1px;height:28px;background:#222224"></div>
<svg class="a" style="left:1891px;top:41px" width="22" height="22" viewBox="0 0 22 22"><path d="M12.5 13.5l5.5 5.5" stroke="#e8e8e8" stroke-width="4.6" stroke-linecap="square"/><path d="M12.8 13.8l5 5" stroke="#333336" stroke-width="1.8"/><circle cx="8.5" cy="8" r="6.6" fill="#2d2d30" stroke="#e8e8e8" stroke-width="1.5"/><circle cx="8.5" cy="8" r="4.8" fill="#dcdcdc" opacity="0.18" stroke="#9a9a9a" stroke-width="0.9"/><path d="M5.2 8h6.6M8.5 4.7v6.6" stroke="#2a72c8" stroke-width="1.7"/></svg>
<svg class="a" style="left:1923px;top:43px" width="22" height="22" viewBox="0 0 22 22"><path d="M12.5 13.5l5.5 5.5" stroke="#e8e8e8" stroke-width="4.6" stroke-linecap="square"/><path d="M12.8 13.8l5 5" stroke="#333336" stroke-width="1.8"/><circle cx="8.5" cy="7.5" r="6.6" fill="#2d2d30" stroke="#e8e8e8" stroke-width="1.5"/><circle cx="8.5" cy="7.5" r="4.8" fill="#dcdcdc" opacity="0.18" stroke="#9a9a9a" stroke-width="0.9"/><path d="M5.2 7.5h6.6" stroke="#2a72c8" stroke-width="1.7"/></svg>
<svg class="a" style="left:1954px;top:41px" width="21" height="22" viewBox="0 0 21 22"><path d="M3.6 12.5h3.1V21H3.6zM8 13.7h2.4V21H8zM12.3 6.3h3.1V21h-3.1zM16 11.2h3.7V21H16z" fill="#7a7a7a" stroke="#e8e8e8" stroke-width="1.2"/><path d="M1.5 20.8h19" stroke="#e8e8e8" stroke-width="1.4"/><path d="M1.8 4.2C2 1.8 4 1 5.6 1.2 7.8 1.5 9 3.4 8.2 5.4 7.6 6.8 6 7.2 5.6 8.8V10" fill="none" stroke="#e8e8e8" stroke-width="2.2"/><path d="M1.8 4.2C2 1.8 4 1 5.6 1.2 7.8 1.5 9 3.4 8.2 5.4 7.6 6.8 6 7.2 5.6 8.8V10" fill="none" stroke="#555" stroke-width="0.8"/></svg>
<div class="a" style="left:2156px;top:36px;width:21px;height:311px;background:#3e3e42"></div>
<svg class="a" style="left:2158px;top:50px" width="17" height="13" viewBox="0 0 17 13"><path d="M0 9.5L8.5 1 17 9.5V13L8.5 5 0 13z" fill="#999"/></svg>
<div class="a" style="left:2157px;top:70px;width:19px;height:194px;background:#686868"></div>
<svg class="a" style="left:2158px;top:318px" width="17" height="13" viewBox="0 0 17 13"><path d="M0 0L8.5 8 17 0v3.5L8.5 12 0 3.5z" fill="#999"/></svg>
<div class="a" style="left:1795px;top:70px;width:361px;height:277px;background:#252526"></div>
<div class="a" style="left:1795px;top:95px;width:361px;height:1px;background:#3f3f46"></div>
<div class="a" style="left:1795px;top:124px;width:361px;height:1px;background:#3f3f46"></div>
<div class="a" style="left:1808px;top:73px;font-size:15px;line-height:19px;font-weight:bold;color:#fff">诊断会话: 1:25 分钟</div>
<div class="a" style="left:1835px;top:96px;width:6px;height:28px;background:#f0f0f0"></div>
<div class="a" style="left:2109px;top:96px;width:7px;height:28px;background:#f0f0f0"></div>
<div class="a" style="left:1851px;top:96px;width:1px;height:28px;background:#4a4a4e"></div>
<div class="a" style="left:2006px;top:96px;width:1px;height:28px;background:#4a4a4e"></div>
<div class="a" style="left:1883px;top:117px;width:2px;height:5px;background:#3c3c3e"></div>
<div class="a" style="left:1914px;top:117px;width:2px;height:5px;background:#3c3c3e"></div>
<div class="a" style="left:1945px;top:117px;width:2px;height:5px;background:#3c3c3e"></div>
<div class="a" style="left:1976px;top:117px;width:2px;height:5px;background:#3c3c3e"></div>
<div class="a" style="left:2037px;top:117px;width:2px;height:5px;background:#3c3c3e"></div>
<div class="a" style="left:2068px;top:117px;width:2px;height:5px;background:#3c3c3e"></div>
<div class="a" style="left:2099px;top:117px;width:2px;height:5px;background:#3c3c3e"></div>
<div class="a" style="left:1854px;top:95px;font-size:15px;line-height:20px;color:#c8c8c8;letter-spacing:-0.3px;-webkit-text-stroke:0.3px #c8c8c8">1:10分钟</div>
<div class="a" style="left:2009px;top:95px;font-size:15px;line-height:20px;color:#c8c8c8;letter-spacing:-0.3px;-webkit-text-stroke:0.3px #c8c8c8">1:20分钟</div>
<svg class="a" style="left:1801px;top:131px" width="12" height="12" viewBox="0 0 12 12"><path d="M11 1v10H1z" fill="#c8c8c8" stroke="#000" stroke-width="1"/></svg>
<svg class="a" style="left:1801px;top:185px" width="12" height="12" viewBox="0 0 12 12"><path d="M11 1v10H1z" fill="#c8c8c8" stroke="#000" stroke-width="1"/></svg>
<svg class="a" style="left:1801px;top:297px" width="12" height="12" viewBox="0 0 12 12"><path d="M11 1v10H1z" fill="#c8c8c8" stroke="#000" stroke-width="1"/></svg>
<div class="a" style="left:1816px;top:127px;font-size:15px;line-height:19px;font-weight:bold;color:#fff">事件</div>
<div class="a" style="left:1840px;top:149px;width:271px;height:29px;border:1px solid #4a4a4e;background:#252526"></div>
<div class="a" style="left:1851px;top:150px;width:1px;height:27px;background:#333"></div>
<div class="a" style="left:2006px;top:150px;width:1px;height:27px;background:#333"></div>
<div class="a" style="left:1841px;top:156px;width:252px;height:17px;background:#6e6e6e"></div>
<svg class="a" style="left:1816px;top:154px" width="14" height="16" viewBox="0 0 14 16"><rect x="1" y="1" width="12" height="14" fill="#3a3a3a" stroke="#e8e8e8" stroke-width="1.8"/><path d="M7 1v14" stroke="#e8e8e8" stroke-width="1.8"/></svg>
<div class="a" style="left:1816px;top:180px;font-size:15px;line-height:19px;font-weight:bold;color:#fff">进程内存 (MB)</div>
<svg class="a" style="left:1973px;top:181px" width="15" height="14" viewBox="0 0 15 14"><path d="M0 0h15L7.5 14z" fill="#3e9ded"/></svg>
<div class="a" style="left:1990px;top:180px;font-size:15px;line-height:19px;color:#f1f1f1">快照</div>
<svg class="a" style="left:2032px;top:182px" width="16" height="16" viewBox="0 0 16 16"><circle cx="8" cy="8" r="7.5" fill="#6ea6c6"/></svg>
<div class="a" style="left:2051px;top:180px;font-size:15px;line-height:19px;color:#f1f1f1">专用字节</div>
<div class="a" style="left:1840px;top:202px;width:271px;height:87px;border:1px solid #4a4a4e;background:#252526"></div>
<div class="a" style="left:1851px;top:203px;width:1px;height:85px;background:#333"></div>
<div class="a" style="left:2006px;top:203px;width:1px;height:85px;background:#333"></div>
<svg class="a" style="left:1841px;top:203px" width="253" height="85" viewBox="0 0 253 85"><path d="M0 8H38L42 10H252V85H0z" fill="#5b7e91"/><path d="M0 8.5H38L42 10.5H252" fill="none" stroke="#6c98b0" stroke-width="1.2"/></svg>
<div class="a" style="left:1807px;top:202px;font-size:15px;line-height:19px;color:#f1f1f1">455</div>
<div class="a" style="left:1824px;top:272px;font-size:15px;line-height:19px;color:#f1f1f1">0</div>
<div class="a" style="left:2117px;top:202px;font-size:15px;line-height:19px;color:#f1f1f1">455</div>
<div class="a" style="left:2117px;top:272px;font-size:15px;line-height:19px;color:#f1f1f1">0</div>
<div class="a" style="left:1816px;top:292px;font-size:15px;line-height:19px;font-weight:bold;color:#fff">CPU (所有处理器的百分比)</div>
<div class="a" style="left:1840px;top:313px;width:271px;height:40px;border:1px solid #4a4a4e;background:#252526"></div>
<div class="a" style="left:1851px;top:314px;width:1px;height:34px;background:#333"></div>
<div class="a" style="left:2006px;top:314px;width:1px;height:34px;background:#333"></div>
<div class="a" style="left:1807px;top:313px;font-size:15px;line-height:19px;color:#f1f1f1">100</div>
<div class="a" style="left:2117px;top:313px;font-size:15px;line-height:19px;color:#f1f1f1">100</div>
<div class="a" style="left:1795px;top:348px;width:382px;height:4px;background:#3e3e42"></div>
<div class="a" style="left:1795px;top:352px;width:382px;height:31px;background:#252526"></div>
<div class="a" style="left:1800px;top:357px;width:44px;height:27px;background:#3f3f46"></div>
<div class="a" style="left:1807px;top:359px;font-size:15px;line-height:20px;color:#f1f1f1">摘要</div>
<div class="a" style="left:1851px;top:359px;font-size:15px;line-height:20px;color:#f1f1f1">事件</div>
<div class="a" style="left:1895px;top:359px;font-size:15px;line-height:20px;color:#f1f1f1">内存使用率</div>
<div class="a" style="left:1985px;top:359px;font-size:15px;line-height:20px;color:#f1f1f1">CPU 使用率</div>
<div class="a" style="left:1795px;top:383px;width:382px;height:3px;background:#3e3e42"></div>
<div class="a" style="left:1795px;top:386px;width:361px;height:174px;background:#252526;overflow:hidden"></div>
<div class="a" style="left:1795px;top:414px;width:361px;height:1px;background:#3f3f46"></div>
<div class="a" style="left:1795px;top:449px;width:361px;height:1px;background:#3f3f46"></div>
<div class="a" style="left:1795px;top:478px;width:361px;height:1px;background:#3f3f46"></div>
<div class="a" style="left:1795px;top:546px;width:361px;height:1px;background:#3f3f46"></div>
<div class="a" style="left:1807px;top:391px;font-size:15px;line-height:20px;font-weight:bold;color:#fff">事件</div>
<svg class="a" style="left:1813px;top:426px" width="18" height="10" viewBox="0 0 18 10"><path d="M1 5l4-4 4 4-4 4z M5 5l4-4 4 4-4 4z M9 5l4-4 4 4-4 4z" fill="none" stroke="#e8e8e8" stroke-width="1.4"/></svg>
<div class="a" style="left:1840px;top:422px;font-size:15px;line-height:20px;color:#f1f1f1">所有事件(1 个，共 1 个)</div>
<div class="a" style="left:1807px;top:454px;font-size:15px;line-height:20px;font-weight:bold;color:#fff">内存使用率</div>
<svg class="a" style="left:1813px;top:488px" width="18" height="15" viewBox="0 0 18 15"><path d="M1 3.5h4l1-2h5l1 2h5v10.5H1z" fill="none" stroke="#ccc" stroke-width="1.5"/><circle cx="9" cy="8.5" r="2.6" fill="none" stroke="#ccc" stroke-width="1.5"/></svg>
<div class="a" style="left:1840px;top:486px;font-size:15px;line-height:20px;color:#8a8a8a">截取快照</div>
<svg class="a" style="left:1813px;top:521px" width="18" height="16" viewBox="0 0 18 16"><path d="M3 1v2M6 1v2M9 1v2M12 1v2M15 1v2M3 13v2M6 13v2M9 13v2M12 13v2M15 13v2" stroke="#e8e8e8" stroke-width="1.4"/><rect x="1" y="3" width="16" height="10" fill="none" stroke="#e8e8e8" stroke-width="1.6"/><rect x="4.5" y="6" width="9" height="4" fill="none" stroke="#e8e8e8" stroke-width="1.4"/></svg>
<div class="a" style="left:1840px;top:520px;font-size:15px;line-height:20px;color:#f1f1f1">启用堆分析(会影响性能)</div>
<div class="a" style="left:1807px;top:551px;font-size:15px;line-height:20px;font-weight:bold;color:#fff;height:9px;overflow:hidden">CPU 使用率</div>
<div class="a" style="left:2157px;top:386px;width:20px;height:174px;background:#3e3e42"></div>
<svg class="a" style="left:2158px;top:405px" width="17" height="13" viewBox="0 0 17 13"><path d="M0 9.5L8.5 1 17 9.5V13L8.5 5 0 13z" fill="#999"/></svg>
<div class="a" style="left:2158px;top:428px;width:18px;height:68px;background:#686868"></div>
<svg class="a" style="left:2158px;top:525px" width="17" height="13" viewBox="0 0 17 13"><path d="M0 0L8.5 8 17 0v3.5L8.5 12 0 3.5z" fill="#999"/></svg>
<div class="a" style="left:4px;top:569px;width:2174px;height:630px;background:#2d2d30;border:1px solid #3f3f46"></div>
<div class="a" style="left:9px;top:574px;font-size:15px;line-height:19px;color:#f1f1f1">调用堆栈</div>
<svg class="a" style="left:79px;top:580px" width="2026" height="7"><defs><pattern id="gp2" width="5" height="5" patternUnits="userSpaceOnUse"><rect x="0" y="0" width="1.2" height="1.2" fill="#55555a"/><rect x="2.5" y="2.5" width="1.2" height="1.2" fill="#45454a"/></pattern></defs><rect width="2026" height="7" fill="url(#gp2)"/></svg>
<svg class="a" style="left:2114px;top:579px" width="12" height="7" viewBox="0 0 12 7"><path d="M0 0h12L6 6z" fill="#f1f1f1"/></svg>
<svg class="a" style="left:2135px;top:575px" width="11" height="16" viewBox="0 0 11 16"><path d="M3 1h5v8H3z" fill="none" stroke="#f1f1f1" stroke-width="1.6"/><path d="M0.5 9.5h10M5.5 9.5v6" stroke="#f1f1f1" stroke-width="1.6"/></svg>
<svg class="a" style="left:2155px;top:577px" width="13" height="12" viewBox="0 0 13 12"><path d="M1 0.5l11 11M12 0.5l-11 11" stroke="#f1f1f1" stroke-width="1.7"/></svg>
<div class="a" style="left:5px;top:597px;width:2151px;height:601px;background:#252526"></div>
<div class="a" style="left:25px;top:597px;width:1px;height:24px;background:#3a3a3d"></div>
<div class="a" style="left:2040px;top:597px;width:1px;height:24px;background:#3a3a3d"></div>
<div class="a" style="left:5px;top:621px;width:2151px;height:1px;background:#3f3f46"></div>
<div class="a" style="left:31px;top:600px;font-size:15px;line-height:20px;color:#f1f1f1">名称</div>
<div class="a" style="left:2046px;top:600px;font-size:15px;line-height:20px;color:#f1f1f1">语言</div>
<div class="a" style="left:5px;top:643px;width:2151px;height:1px;background:#000"></div>
<div class="cs" id="cs0" style="top:624px;color:#f1f1f1;transform:scaleX(0.9785);transform-origin:0 0">Qt5Cored.dll!qt_message_fatal(QtMsgType __formal, const QMessageLogContext &amp; context, const QString &amp; message) 行 1875</div>
<div class="lang" style="left:2045px;top:624px;color:#f1f1f1">C++</div>
<div class="a" style="left:5px;top:664px;width:2151px;height:1px;background:#000"></div>
<div class="cs" id="cs1" style="top:645px;color:#f1f1f1;transform:scaleX(0.9720);transform-origin:0 0">Qt5Cored.dll!QMessageLogger::fatal(const char * msg, ...) 行 888</div>
<div class="lang" style="left:2045px;top:645px;color:#f1f1f1">C++</div>
<div class="a" style="left:5px;top:685px;width:2151px;height:1px;background:#000"></div>
<div class="cs" id="cs2" style="top:666px;color:#f1f1f1;transform:scaleX(0.9754);transform-origin:0 0">Qt5Cored.dll!qt_assert_x(const char * where, const char * what, const char * file, int line) 行 3216</div>
<div class="lang" style="left:2045px;top:666px;color:#f1f1f1">C++</div>
<div class="a" style="left:5px;top:686px;width:2151px;height:20px;background:#3f3f46"></div>
<div class="a" style="left:5px;top:706px;width:2151px;height:1px;background:#000"></div>
<div class="cs" id="cs3" style="top:687px;color:#f1f1f1;transform:scaleX(0.9995);transform-origin:0 0">Qt5Widgetsd.dll!QWidget::mapTo(const QWidget * parent, const QPoint &amp; pos) 行 4252</div>
<div class="lang" style="left:2045px;top:687px;color:#f1f1f1">C++</div>
<div class="a" style="left:5px;top:727px;width:2151px;height:1px;background:#000"></div>
<div class="cs" id="cs4" style="top:708px;color:#f1f1f1;transform:scaleX(0.9955);transform-origin:0 0">Qt5Widgetsd.dll!QWidgetBackingStore::qt_flush(QWidget * widget, const QRegion &amp; region, QBackingStore * backingStore, QWidget * tlw, QPlatformTextureList * widgetTextures, QWidgetBackingStore * widgetBackingStore) 行 124</div>
<div class="lang" style="left:2045px;top:708px;color:#f1f1f1">C++</div>
<div class="a" style="left:5px;top:748px;width:2151px;height:1px;background:#000"></div>
<div class="cs" id="cs5" style="top:729px;color:#f1f1f1;transform:scaleX(1.0037);transform-origin:0 0">Qt5Widgetsd.dll!QWidgetBackingStore::flush(QWidget * widget) 行 1468</div>
<div class="lang" style="left:2045px;top:729px;color:#f1f1f1">C++</div>
<div class="a" style="left:5px;top:769px;width:2151px;height:1px;background:#000"></div>
<div class="cs" id="cs6" style="top:750px;color:#f1f1f1;transform:scaleX(0.9872);transform-origin:0 0">Qt5Widgetsd.dll!QWidgetBackingStore::endPaint(const QRegion &amp; cleaned, QBackingStore * backingStore, BeginPaintInfo * beginPaintInfo) 行 364</div>
<div class="lang" style="left:2045px;top:750px;color:#f1f1f1">C++</div>
<div class="a" style="left:5px;top:790px;width:2151px;height:1px;background:#000"></div>
<div class="cs" id="cs7" style="top:771px;color:#f1f1f1;transform:scaleX(0.9904);transform-origin:0 0">Qt5Widgetsd.dll!QWidgetBackingStore::doSync() 行 1427</div>
<div class="lang" style="left:2045px;top:771px;color:#f1f1f1">C++</div>
<div class="a" style="left:5px;top:811px;width:2151px;height:1px;background:#000"></div>
<div class="cs" id="cs8" style="top:792px;color:#f1f1f1;transform:scaleX(0.9876);transform-origin:0 0">Qt5Widgetsd.dll!QWidgetBackingStore::sync() 行 1205</div>
<div class="lang" style="left:2045px;top:792px;color:#f1f1f1">C++</div>
<div class="a" style="left:5px;top:832px;width:2151px;height:1px;background:#000"></div>
<div class="cs" id="cs9" style="top:813px;color:#f1f1f1;transform:scaleX(0.9850);transform-origin:0 0">Qt5Widgetsd.dll!QWidgetPrivate::syncBackingStore() 行 1963</div>
<div class="lang" style="left:2045px;top:813px;color:#f1f1f1">C++</div>
<div class="a" style="left:5px;top:853px;width:2151px;height:1px;background:#000"></div>
<div class="cs" id="cs10" style="top:834px;color:#f1f1f1;transform:scaleX(0.9895);transform-origin:0 0">Qt5Widgetsd.dll!QWidget::event(QEvent * event) 行 9265</div>
<div class="lang" style="left:2045px;top:834px;color:#f1f1f1">C++</div>
<div class="a" style="left:5px;top:874px;width:2151px;height:1px;background:#000"></div>
<div class="cs" id="cs11" style="top:855px;color:#f1f1f1;transform:scaleX(0.9912);transform-origin:0 0">Qt5Widgetsd.dll!QApplicationPrivate::notify_helper(QObject * receiver, QEvent * e) 行 3737</div>
<div class="lang" style="left:2045px;top:855px;color:#f1f1f1">C++</div>
<div class="a" style="left:5px;top:895px;width:2151px;height:1px;background:#000"></div>
<div class="cs" id="cs12" style="top:876px;color:#f1f1f1;transform:scaleX(0.9969);transform-origin:0 0">Qt5Widgetsd.dll!QApplication::notify(QObject * receiver, QEvent * e) 行 3687</div>
<div class="lang" style="left:2045px;top:876px;color:#f1f1f1">C++</div>
<div class="a" style="left:5px;top:916px;width:2151px;height:1px;background:#000"></div>
<div class="cs" id="cs13" style="top:897px;color:#f1f1f1;transform:scaleX(0.9899);transform-origin:0 0">Qt5Cored.dll!QCoreApplication::notifyInternal2(QObject * receiver, QEvent * event) 行 1084</div>
<div class="lang" style="left:2045px;top:897px;color:#f1f1f1">C++</div>
<div class="a" style="left:5px;top:937px;width:2151px;height:1px;background:#000"></div>
<div class="cs" id="cs14" style="top:918px;color:#f1f1f1;transform:scaleX(0.9798);transform-origin:0 0">Qt5Cored.dll!QCoreApplication::sendEvent(QObject * receiver, QEvent * event) 行 1472</div>
<div class="lang" style="left:2045px;top:918px;color:#f1f1f1">C++</div>
<div class="a" style="left:5px;top:958px;width:2151px;height:1px;background:#000"></div>
<div class="cs" id="cs15" style="top:939px;color:#f1f1f1;transform:scaleX(0.9759);transform-origin:0 0">Qt5Cored.dll!QCoreApplicationPrivate::sendPostedEvents(QObject * receiver, int event_type, QThreadData * data) 行 1821</div>
<div class="lang" style="left:2045px;top:939px;color:#f1f1f1">C++</div>
<div class="a" style="left:5px;top:979px;width:2151px;height:1px;background:#000"></div>
<div class="cs" id="cs16" style="top:960px;color:#f1f1f1;transform:scaleX(0.9652);transform-origin:0 0">Qt5Cored.dll!QEventDispatcherWin32::sendPostedEvents() 行 1092</div>
<div class="lang" style="left:2045px;top:960px;color:#f1f1f1">C++</div>
<div class="a" style="left:5px;top:1000px;width:2151px;height:1px;background:#000"></div>
<div class="cs" id="cs17" style="top:981px;color:#f1f1f1;transform:scaleX(0.9735);transform-origin:0 0">qwindowsd.dll!QWindowsGuiEventDispatcher::sendPostedEvents() 行 82</div>
<div class="lang" style="left:2045px;top:981px;color:#f1f1f1">C++</div>
<div class="a" style="left:5px;top:1021px;width:2151px;height:1px;background:#000"></div>
<div class="cs" id="cs18" style="top:1002px;color:#f1f1f1;transform:scaleX(0.9854);transform-origin:0 0">Qt5Cored.dll!qt_internal_proc(HWND__ * hwnd, unsigned int message, unsigned int wp, long lp) 行 247</div>
<div class="lang" style="left:2045px;top:1002px;color:#f1f1f1">C++</div>
<div class="a" style="left:5px;top:1042px;width:2151px;height:1px;background:#000"></div>
<div class="cs" id="cs19" style="top:1023px;color:#9b9b9b;transform:scaleX(1.0681);transform-origin:0 0">[外部代码]</div>
<div class="a" style="left:5px;top:1063px;width:2151px;height:1px;background:#000"></div>
<div class="cs" id="cs20" style="top:1044px;color:#9b9b9b;transform:scaleX(1.0410);transform-origin:0 0">user32.dll![下面的框架可能不正确和/或缺失，没有为 user32.dll 加载符号]</div>
<div class="lang" style="left:2045px;top:1044px;color:#9b9b9b">未知</div>
<div class="a" style="left:5px;top:1084px;width:2151px;height:1px;background:#000"></div>
<div class="cs" id="cs21" style="top:1065px;color:#f1f1f1;transform:scaleX(0.9984);transform-origin:0 0">qwindowsd.dll!QWindowsFontEngine::getGlyphBearings(unsigned int glyph, double * leftBearing, double * rightBearing) 行 619</div>
<div class="lang" style="left:2045px;top:1065px;color:#f1f1f1">C++</div>
<div class="a" style="left:5px;top:1105px;width:2151px;height:1px;background:#000"></div>
<div class="cs" id="cs22" style="top:1086px;color:#9b9b9b;transform:scaleX(1.0681);transform-origin:0 0">[外部代码]</div>
<div class="a" style="left:25px;top:622px;width:1px;height:483px;background:#000"></div>
<div class="a" style="left:2040px;top:622px;width:1px;height:483px;background:#000"></div>
<svg class="a" style="left:8px;top:626px" width="16" height="15" viewBox="0 0 16 15"><path d="M1.5 3.8H6.8V1.2L13.8 7 6.8 12.8V10.2H1.5Z" fill="#f8cc18" stroke="#d8d8d8" stroke-width="1.1"/></svg>
<svg class="a" style="left:6px;top:687px" width="19" height="17" viewBox="0 0 19 17"><path d="M4.5 1.5C4 5 6 6.5 10.5 6.5V3L17 9l-6.5 6v-3C5 12 1.5 10 2 5z" fill="#285a25" stroke="#e0e0e0" stroke-width="1.3"/></svg>
<div class="a" style="left:2156px;top:597px;width:21px;height:601px;background:#3e3e42"></div>
<svg class="a" style="left:2160px;top:605px" width="13" height="7" viewBox="0 0 13 7"><path d="M0 7L6.5 0 13 7z" fill="#555558"/></svg>
<svg class="a" style="left:2160px;top:1184px" width="13" height="7" viewBox="0 0 13 7"><path d="M0 0h13L6.5 7z" fill="#555558"/></svg>
<div class="a" style="left:2175px;top:659px;width:8px;height:52px;background:#1c2024;border-radius:3px"></div>
<div class="a" style="left:2178px;top:663px;width:3px;height:21px;background:#4a3b1c"></div>
<div class="a" style="left:2178px;top:684px;width:3px;height:2px;background:#e8a020"></div>
<div class="a" style="left:2178px;top:686px;width:3px;height:20px;background:#2c5a2c"></div>
<div class="a" style="left:2178px;top:706px;width:3px;height:2px;background:#60d030"></div>
<div class="a" style="left:0px;top:1198px;width:2181px;height:34px;background:#2d2d30"></div>
<div class="a" style="left:78px;top:1198px;width:2100px;height:1px;background:#3f3f46"></div>
<div class="a" style="left:4px;top:1198px;width:75px;height:25px;background:#252526;border:1px solid #3f3f46;border-top:none"></div>
<div class="a" style="left:11px;top:1200px;font-size:15px;line-height:20px;color:#0097fb">调用堆栈</div>
<div class="a" style="left:85px;top:1200px;font-size:15px;line-height:20px;color:#f1f1f1">断点</div>
<div class="a" style="left:129px;top:1200px;font-size:15px;line-height:20px;color:#f1f1f1">异常设置</div>
<div class="a" style="left:203px;top:1200px;font-size:15px;line-height:20px;color:#f1f1f1">命令窗口</div>
<div class="a" style="left:277px;top:1200px;font-size:15px;line-height:20px;color:#f1f1f1">即时窗口</div>
<div class="a" style="left:351px;top:1200px;font-size:15px;line-height:20px;color:#f1f1f1">输出</div>
</body></html>
